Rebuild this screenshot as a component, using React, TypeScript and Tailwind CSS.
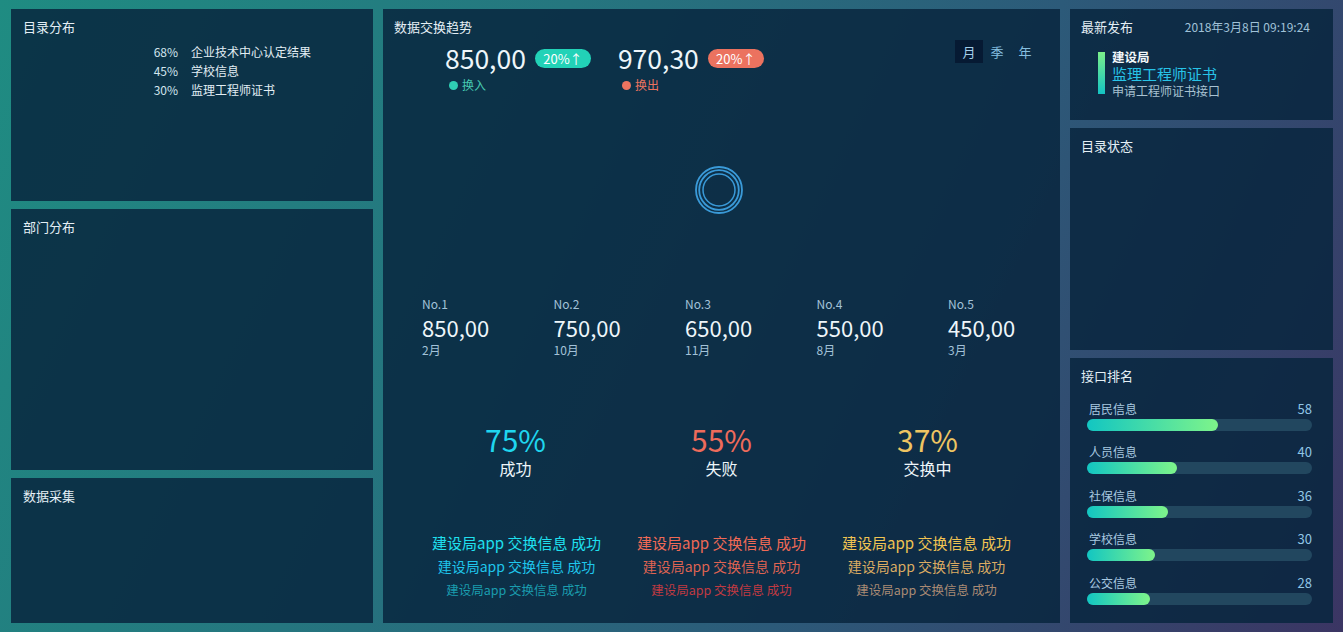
import React from 'react';

const PANEL = 'bg-[rgba(8,38,62,0.85)]';

function Title({ children }: { children: React.ReactNode }) {
  return <div className="text-[13px] leading-[18px] text-[#e4eff5]">{children}</div>;
}

function Panel({ title, className, children }: { title: string; className?: string; children?: React.ReactNode }) {
  return (
    <div className={`${PANEL} pt-[9px] pl-[12px] ${className ?? ''}`}>
      <Title>{title}</Title>
      {children}
    </div>
  );
}

const legend = [
  ['68%', '企业技术中心认定结果'],
  ['45%', '学校信息'],
  ['30%', '监理工程师证书'],
];

const topList = [
  ['No.1', '850,00', '2月'],
  ['No.2', '750,00', '10月'],
  ['No.3', '650,00', '11月'],
  ['No.4', '550,00', '8月'],
  ['No.5', '450,00', '3月'],
];

const rates = [
  { v: '75%', label: '成功', color: 'text-[#1fd6ef]' },
  { v: '55%', label: '失败', color: 'text-[#ee6b5b]' },
  { v: '37%', label: '交换中', color: 'text-[#efc562]' },
];

const logs = [
  ['text-[#1fe0ef]', 'text-[#1fc6ec]', 'text-[#1a9cae]'],
  ['text-[#f06a56]', 'text-[#df6352]', 'text-[#c03a42]'],
  ['text-[#f1c452]', 'text-[#dbab62]', 'text-[#a98a74]'],
];

const ranks: [string, number][] = [
  ['居民信息', 58],
  ['人员信息', 40],
  ['社保信息', 36],
  ['学校信息', 30],
  ['公交信息', 28],
];

function Spinner() {
  return (
    <svg width="50" height="50" viewBox="0 0 50 50" fill="none">
      <circle cx="25" cy="25" r="23" stroke="#3a9ad8" strokeWidth="1.8" />
      <circle cx="25" cy="25" r="19.8" stroke="#3a9ad8" strokeWidth="1.8" />
      <circle cx="25" cy="25" r="16" stroke="#3a9ad8" strokeWidth="1.5" />
    </svg>
  );
}

function Stat({ value, badge, badgeBg, dot, label, labelColor }: { value: string; badge: string; badgeBg: string; dot: string; label: string; labelColor: string }) {
  return (
    <div className="flex flex-col mt-[3px]">
      <div className="flex items-center">
        <span className="text-[26.5px] leading-[30px] text-[#eef6fa]">{value}</span>
        <span className={`ml-[9px] flex h-[19px] w-[56px] items-center justify-center rounded-full text-[13px] leading-[19px] text-white ${badgeBg}`}>
          {badge}
        </span>
      </div>
      <div className="mt-[4px] flex items-center pl-[4px] text-[12px] leading-[16px]">
        <span className={`h-[9px] w-[9px] rounded-full ${dot}`} />
        <span className={`ml-[4px] ${labelColor}`}>{label}</span>
      </div>
    </div>
  );
}

export default function App() {
  return (
    <div className="flex h-[632px] w-[1343px] gap-[10px] overflow-hidden bg-[linear-gradient(115deg,#1f8c82_0%,#25767f_35%,#2c5a79_65%,#3b3563_100%)] pt-[9px] pb-[9px] pl-[11px] pr-[10px] font-['Noto_Sans_CJK_SC','Noto_Sans',sans-serif]">
      {/* left column */}
      <div className="flex w-[362px] flex-col gap-[8px]">
        <Panel title="目录分布" className="h-[192px]">
          <div className="mt-[6px] pl-[119px] text-[12px] leading-[19px]">
            {legend.map(([p, l]) => (
              <div key={l} className="flex">
                <span className="w-[36px] text-right text-[#d2e5ee]">{p}</span>
                <span className="ml-[13px] text-[#e2eef4]">{l}</span>
              </div>
            ))}
          </div>
        </Panel>
        <Panel title="部门分布" className="h-[261px]" />
        <Panel title="数据采集" className="h-[145px]" />
      </div>

      {/* center */}
      <div className={`${PANEL} flex w-[677px] flex-col pt-[9px]`}>
        <div className="pl-[11px]">
          <Title>数据交换趋势</Title>
        </div>
        <div className="mt-[4px] flex items-start pl-[62px] pr-[21px]">
          <Stat value="850,00" badge="20%↑" badgeBg="bg-[#22d2b7]" dot="bg-[#2fcfb4]" label="换入" labelColor="text-[#46c9b1]" />
          <div className="ml-[27px]">
            <Stat value="970,30" badge="20%↑" badgeBg="bg-[#eb725f]" dot="bg-[#ec7460]" label="换出" labelColor="text-[#ec7460]" />
          </div>
          <div className="ml-auto flex text-[13px] leading-[23px] text-[#86bfe0]">
            <span className="w-[28px] bg-[#061a33] text-center text-[#a4d0ea]">月</span>
            <span className="w-[28px] text-center">季</span>
            <span className="w-[28px] text-center">年</span>
          </div>
        </div>

        <div className="mt-[72px] flex justify-center pr-[5px]">
          <Spinner />
        </div>

        <div className="mt-[81px] flex pl-[39px]">
          {topList.map(([no, v, m]) => (
            <div key={no} className="w-[131.5px] shrink-0">
              <div className="text-[12px] leading-[16px] text-[#a3c2d8]">{no}</div>
              <div className="mt-[2px] text-[22px] leading-[26px] text-[#eef6fa]">{v}</div>
              <div className="mt-[2px] text-[12px] leading-[16px] text-[#a3c2d8]">{m}</div>
            </div>
          ))}
        </div>

        <div className="mt-[65px] flex justify-center">
          {rates.map((r) => (
            <div key={r.label} className="w-[206px] text-center">
              <div className={`text-[30px] leading-[32px] ${r.color}`}>{r.v}</div>
              <div className="mt-[3px] text-[16px] leading-[20px] text-[#eef6fa]">{r.label}</div>
            </div>
          ))}
        </div>

        <div className="mt-[55px] flex justify-center">
          {logs.map((c, i) => (
            <div key={i} className="w-[205px] text-center">
              <div className={`text-[15px] leading-[20px] ${c[0]}`}>建设局app 交换信息 成功</div>
              <div className={`mt-[3px] text-[14px] leading-[20px] ${c[1]}`}>建设局app 交换信息 成功</div>
              <div className={`mt-[5px] text-[12.5px] leading-[18px] ${c[2]}`}>建设局app 交换信息 成功</div>
            </div>
          ))}
        </div>
      </div>

      {/* right column */}
      <div className="flex w-[263px] flex-col gap-[8px]">
        <div className={`${PANEL} h-[111px] pt-[9px]`}>
          <div className="flex items-center pl-[11px] pr-[23px]">
            <Title>最新发布</Title>
            <span className="ml-auto text-[12px] leading-[18px] text-[#a0c2d8]">2018年3月8日 09:19:24</span>
          </div>
          <div className="mt-[12px] flex pl-[28px]">
            <div className="mt-[4px] h-[42px] w-[7px] bg-[linear-gradient(to_bottom,#7cf08a,#14c3c3)]" />
            <div className="ml-[7px] flex flex-col">
              <span className="text-[12.5px] font-bold leading-[17px] text-[#f2f8fb]">建设局</span>
              <span className="text-[15px] leading-[18px] text-[#28c4e8]">监理工程师证书</span>
              <span className="text-[12px] leading-[16px] text-[#a8c2d2]">申请工程师证书接口</span>
            </div>
          </div>
        </div>
        <div className={`${PANEL} h-[222px] pt-[9px] pl-[11px]`}>
          <Title>目录状态</Title>
        </div>
        <div className={`${PANEL} h-[265px] pt-[9px]`}>
          <div className="pl-[11px]">
            <Title>接口排名</Title>
          </div>
          <div className="mt-[16px] flex flex-col gap-[13.4px] pl-[17px] pr-[21px]">
            {ranks.map(([name, v]) => (
              <div key={name}>
                <div className="flex text-[12px] leading-[16px]">
                  <span className="pl-[2px] text-[#a9c9e0]">{name}</span>
                  <span className="ml-auto text-[13px] text-[#90c6e6]">{v}</span>
                </div>
                <div className="mt-[2px] h-[12px] w-full rounded-full bg-[#22475f]">
                  <div className="h-full rounded-full bg-[linear-gradient(to_right,#12c6c2,#7ef48a)]" style={{ width: `${v}%` }} />
                </div>
              </div>
            ))}
          </div>
        </div>
      </div>
    </div>
  );
}
